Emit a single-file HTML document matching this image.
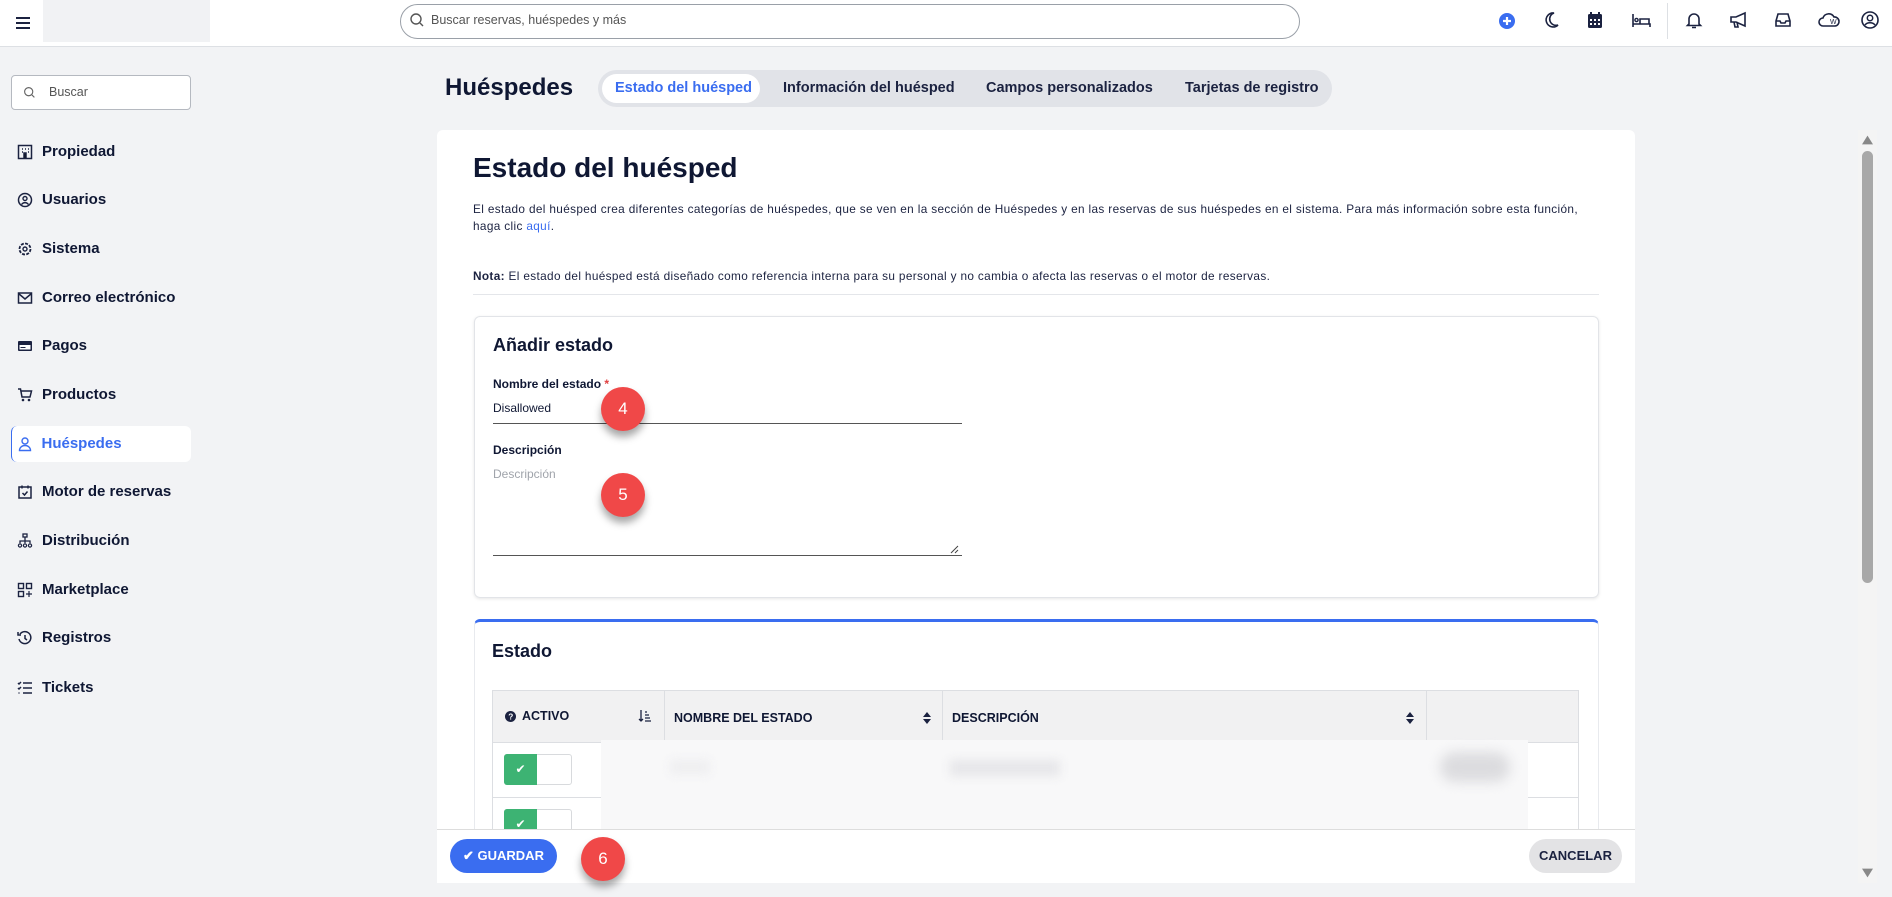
<!DOCTYPE html>
<html><head><meta charset="utf-8"><style>
*{box-sizing:border-box;margin:0;padding:0}
body{width:1892px;height:897px;overflow:hidden;background:#f2f3f5;font-family:"Liberation Sans",sans-serif;color:#0f1733;position:relative}
.abs{position:absolute}
.hdr{left:0;top:0;width:1892px;height:47px;background:#fff;border-bottom:1px solid #dde0e4}
.ico{position:absolute;width:20px;height:20px}
.nav{position:absolute;left:11px;width:180px;height:36px;font-size:15px;font-weight:600;color:#0f1733}
.nav svg{position:absolute;left:6px;top:10px;width:16px;height:16px}
.nav span{position:absolute;left:31px;top:9px}
.tab{position:absolute;top:70px;height:37px;line-height:37px;font-size:14.5px;font-weight:600;color:#1b2240}
.badge{position:absolute;width:44px;height:44px;border-radius:50%;background:#f04848;color:#fff;font-size:17px;text-align:center;line-height:44px;box-shadow:0 6px 8px rgba(0,0,0,.35)}
</style></head><body>
<div class="abs hdr"></div>
<svg class="ico" style="left:13px;top:13px" viewBox="0 0 20 20"><path d="M3 5h14M3 10h14M3 15h14" stroke="#1b2240" stroke-width="2"/></svg>
<div class="abs" style="left:43px;top:0;width:167px;height:42px;background:#f1f2f4"></div>
<div class="abs" style="left:400px;top:4px;width:900px;height:35px;border:1px solid #9aa0a8;border-radius:18px;background:#fff"></div>
<svg class="ico" style="left:409px;top:12px;width:16px;height:16px" viewBox="0 0 16 16"><circle cx="7" cy="7" r="5" fill="none" stroke="#555" stroke-width="1.4"/><path d="M11 11l3 3" stroke="#555" stroke-width="1.4"/></svg>
<div class="abs" style="left:431px;top:13px;font-size:12.5px;color:#555">Buscar reservas, huéspedes y más</div>
<svg class="ico" style="left:1497px;top:11px" viewBox="0 0 20 20"><circle cx="10" cy="10" r="8" fill="#3a6df0"/><path d="M10 6v8M6 10h8" stroke="#fff" stroke-width="2.2"/></svg>
<svg class="ico" style="left:1541px;top:10px" viewBox="0 0 20 20"><path d="M13 3a7 7 0 1 0 4 12A6 6 0 0 1 13 3z" fill="none" stroke="#1b2240" stroke-width="1.6"/></svg>
<svg class="ico" style="left:1585px;top:10px" viewBox="0 0 20 20"><rect x="3" y="4" width="14" height="14" rx="1.5" fill="#1b2240"/><path d="M6 2v4M14 2v4" stroke="#1b2240" stroke-width="2"/><g fill="#fff"><rect x="5" y="9" width="2" height="2"/><rect x="9" y="9" width="2" height="2"/><rect x="13" y="9" width="2" height="2"/><rect x="5" y="13" width="2" height="2"/><rect x="9" y="13" width="2" height="2"/><rect x="13" y="13" width="2" height="2"/></g></svg>
<svg class="ico" style="left:1631px;top:10px" viewBox="0 0 20 20"><path d="M2 4v13M2 14h17v3M18 14V9H9v5" fill="none" stroke="#1b2240" stroke-width="1.6"/><circle cx="5.5" cy="10" r="1.6" fill="none" stroke="#1b2240" stroke-width="1.4"/></svg>
<div class="abs" style="left:1667px;top:3px;width:1px;height:36px;background:#dde0e4"></div>
<svg class="ico" style="left:1684px;top:10px" viewBox="0 0 20 20"><path d="M5 14V9a5 5 0 0 1 10 0v5l1.5 1.5h-13z M8 17.5h4" fill="none" stroke="#1b2240" stroke-width="1.6"/></svg>
<svg class="ico" style="left:1729px;top:10px" viewBox="0 0 20 20"><path d="M2 7h5l9-4v13l-9-4H2z M5 12l1 5h3l-1-5" fill="none" stroke="#1b2240" stroke-width="1.6"/></svg>
<svg class="ico" style="left:1773px;top:10px" viewBox="0 0 20 20"><path d="M3 11l2-7h10l2 7v5H3z M3 11h4l1 2h4l1-2h4" fill="none" stroke="#1b2240" stroke-width="1.6"/></svg>
<svg class="ico" style="left:1817px;top:10px;width:24px" viewBox="0 0 24 20"><path d="M6 16a4 4 0 0 1 0-8 6 6 0 0 1 11-1 4.5 4.5 0 0 1 1 9z" fill="none" stroke="#1b2240" stroke-width="1.6"/><text x="13" y="14" font-size="7" font-family="Liberation Sans" fill="#1b2240">W</text></svg>
<svg class="ico" style="left:1860px;top:10px" viewBox="0 0 20 20"><circle cx="10" cy="10" r="8" fill="none" stroke="#1b2240" stroke-width="1.6"/><circle cx="10" cy="8" r="2.7" fill="none" stroke="#1b2240" stroke-width="1.5"/><path d="M5 15c2-3 8-3 10 0" fill="none" stroke="#1b2240" stroke-width="1.5"/></svg>

<div class="abs" style="left:11px;top:75px;width:180px;height:35px;border:1px solid #b5b9c0;border-radius:4px;background:#fff"></div>
<svg class="ico" style="left:23px;top:86px;width:13px;height:13px" viewBox="0 0 16 16"><circle cx="7" cy="7" r="5" fill="none" stroke="#666" stroke-width="1.4"/><path d="M11 11l3 3" stroke="#666" stroke-width="1.4"/></svg>
<div class="abs" style="left:49px;top:85px;font-size:12.5px;color:#555">Buscar</div>

<div class="nav" style="top:134px"><svg viewBox="0 0 16 16"><rect x="1.5" y="1.5" width="13" height="13" fill="none" stroke="#1b2240" stroke-width="1.5"/><path d="M5 5h1M8 5h1M11 5h1M5 8h1M11 8h1M7 14V9h2v5" stroke="#1b2240" stroke-width="1.5"/></svg><span>Propiedad</span></div>
<div class="nav" style="top:182px"><svg viewBox="0 0 16 16"><circle cx="8" cy="8" r="6.5" fill="none" stroke="#1b2240" stroke-width="1.5"/><circle cx="8" cy="6.5" r="2" fill="none" stroke="#1b2240" stroke-width="1.4"/><path d="M4.5 12.5c2-2.5 5-2.5 7 0" fill="none" stroke="#1b2240" stroke-width="1.4"/></svg><span>Usuarios</span></div>
<div class="nav" style="top:231px"><svg viewBox="0 0 16 16"><circle cx="8" cy="8" r="5.5" fill="none" stroke="#1b2240" stroke-width="1.8" stroke-dasharray="3 1.3"/><circle cx="8" cy="8" r="2" fill="none" stroke="#1b2240" stroke-width="1.4"/></svg><span>Sistema</span></div>
<div class="nav" style="top:280px"><svg viewBox="0 0 16 16"><rect x="1.5" y="3" width="13" height="10" fill="none" stroke="#1b2240" stroke-width="1.5"/><path d="M1.5 3.5L8 9l6.5-5.5" fill="none" stroke="#1b2240" stroke-width="1.5"/></svg><span>Correo electrónico</span></div>
<div class="nav" style="top:328px"><svg viewBox="0 0 16 16"><rect x="1" y="3" width="14" height="10" rx="1" fill="#1b2240"/><rect x="2.5" y="7" width="11" height="4.5" fill="#fff"/><path d="M3.5 9.5h5" stroke="#1b2240"/></svg><span>Pagos</span></div>
<div class="nav" style="top:377px"><svg viewBox="0 0 16 16"><path d="M1 2h2.5l1.5 8h8l1.5-6H4" fill="none" stroke="#1b2240" stroke-width="1.5"/><circle cx="6" cy="13" r="1.3" fill="#1b2240"/><circle cx="12" cy="13" r="1.3" fill="#1b2240"/></svg><span>Productos</span></div>
<div class="nav" style="top:426px;background:#fff;border-radius:6px;border-left:1.5px solid #3a6df0;color:#3a6df0"><svg viewBox="0 0 16 16" style="left:4.5px"><circle cx="8" cy="5" r="3" fill="none" stroke="#3a6df0" stroke-width="1.4"/><path d="M2.5 14.5c0-3 2.5-5 5.5-5s5.5 2 5.5 5z" fill="none" stroke="#3a6df0" stroke-width="1.4"/></svg><span style="left:29.5px">Huéspedes</span></div>
<div class="nav" style="top:474px"><svg viewBox="0 0 16 16"><rect x="2" y="3" width="12" height="11" fill="none" stroke="#1b2240" stroke-width="1.5"/><path d="M5 1.5v3M11 1.5v3M5.5 9l2 2 3-3.5" fill="none" stroke="#1b2240" stroke-width="1.5"/></svg><span>Motor de reservas</span></div>
<div class="nav" style="top:523px"><svg viewBox="0 0 16 16"><rect x="6" y="1" width="4" height="3" fill="none" stroke="#1b2240" stroke-width="1.3"/><path d="M8 4v4M3 10V8h10v2M8 8v2" fill="none" stroke="#1b2240" stroke-width="1.3"/><circle cx="3" cy="12.5" r="1.6" fill="none" stroke="#1b2240" stroke-width="1.2"/><circle cx="8" cy="12.5" r="1.6" fill="none" stroke="#1b2240" stroke-width="1.2"/><circle cx="13" cy="12.5" r="1.6" fill="none" stroke="#1b2240" stroke-width="1.2"/></svg><span>Distribución</span></div>
<div class="nav" style="top:572px"><svg viewBox="0 0 16 16"><rect x="1.5" y="1.5" width="5" height="5" fill="none" stroke="#1b2240" stroke-width="1.4"/><rect x="9.5" y="1.5" width="5" height="5" fill="none" stroke="#1b2240" stroke-width="1.4"/><rect x="1.5" y="9.5" width="5" height="5" fill="none" stroke="#1b2240" stroke-width="1.4"/><path d="M12 9v6M9 12h6" stroke="#1b2240" stroke-width="1.2"/></svg><span>Marketplace</span></div>
<div class="nav" style="top:620px"><svg viewBox="0 0 16 16"><path d="M3 4a6 6 0 1 1-1 5" fill="none" stroke="#1b2240" stroke-width="1.5"/><path d="M1 2v3h3M8 5v3.5l2 1.5" fill="none" stroke="#1b2240" stroke-width="1.5"/></svg><span>Registros</span></div>
<div class="nav" style="top:670px"><svg viewBox="0 0 16 16"><path d="M6 3h9M6 8h9M6 13h9M1 3l1 1 2-2M1 8l1 1 2-2M1.5 13h1" fill="none" stroke="#1b2240" stroke-width="1.5"/></svg><span>Tickets</span></div>

<div class="abs" style="left:445px;top:74px;font-size:24px;font-weight:700;color:#0f1733">Huéspedes</div>
<div class="abs" style="left:598px;top:70px;width:734px;height:37px;border-radius:19px;background:#e1e3e8"></div>
<div class="abs" style="left:602px;top:74px;width:158px;height:29px;border-radius:15px;background:#fff"></div>
<div class="tab" style="left:615px;color:#3a6df0">Estado del huésped</div>
<div class="tab" style="left:783px">Información del huésped</div>
<div class="tab" style="left:986px">Campos personalizados</div>
<div class="tab" style="left:1185px">Tarjetas de registro</div>

<div class="abs" style="left:437px;top:130px;width:1198px;height:767px;background:#fff;border-radius:6px"></div>
<div class="abs" style="left:473px;top:152px;font-size:28px;font-weight:600;color:#0f1733">Estado del huésped</div>
<div class="abs" style="left:473px;top:201px;width:1118px;font-size:11.8px;line-height:17px;letter-spacing:0.35px;color:#1b2240">El estado del huésped crea diferentes categorías de huéspedes, que se ven en la sección de Huéspedes y en las reservas de sus huéspedes en el sistema. Para más información sobre esta función, haga clic <span style="color:#3a6df0">aquí</span>.</div>
<div class="abs" style="left:473px;top:269px;font-size:11.8px;letter-spacing:0.35px;color:#1b2240"><b>Nota:</b> El estado del huésped está diseñado como referencia interna para su personal y no cambia o afecta las reservas o el motor de reservas.</div>
<div class="abs" style="left:473px;top:294px;width:1126px;height:1px;background:#e4e6ea"></div>

<div class="abs" style="left:474px;top:316px;width:1125px;height:282px;border:1px solid #e2e4e8;border-radius:6px;box-shadow:0 1px 3px rgba(0,0,0,.1)"></div>
<div class="abs" style="left:493px;top:335px;font-size:18px;font-weight:600">Añadir estado</div>
<div class="abs" style="left:493px;top:377px;font-size:12px;font-weight:600">Nombre del estado <span style="color:#e04040">*</span></div>
<div class="abs" style="left:493px;top:401px;font-size:12px">Disallowed</div>
<div class="abs" style="left:493px;top:423px;width:469px;height:1px;background:#555"></div>
<div class="abs" style="left:493px;top:443px;font-size:12px;font-weight:600">Descripción</div>
<div class="abs" style="left:493px;top:467px;font-size:12px;color:#a0a4ab">Descripción</div>
<div class="abs" style="left:493px;top:555px;width:469px;height:1px;background:#555"></div>
<svg class="abs" style="left:950px;top:545px;width:9px;height:9px" viewBox="0 0 9 9"><path d="M1 8L8 1M5 8L8 5" stroke="#444" stroke-width="1"/></svg>
<div class="badge" style="left:601px;top:387px">4</div>
<div class="badge" style="left:601px;top:473px">5</div>

<div class="abs" style="left:474px;top:619px;width:1125px;height:278px;border:1px solid #e8eaee;border-top:3px solid #3a6df0;border-radius:6px 6px 0 0"></div>
<div class="abs" style="left:492px;top:641px;font-size:18px;font-weight:600">Estado</div>
<div class="abs" style="left:492px;top:690px;width:1087px;height:207px;border:1px solid #dcdee2;background:#fff"></div>
<div class="abs" style="left:493px;top:691px;width:1085px;height:52px;background:#f1f1f2;border-bottom:1px solid #dcdee2"></div>
<div class="abs" style="left:664px;top:691px;width:1px;height:206px;background:#dcdee2"></div>
<div class="abs" style="left:942px;top:691px;width:1px;height:206px;background:#dcdee2"></div>
<div class="abs" style="left:1426px;top:691px;width:1px;height:206px;background:#dcdee2"></div>
<div class="abs" style="left:493px;top:797px;width:1085px;height:1px;background:#dcdee2"></div>
<svg class="abs" style="left:505px;top:711px;width:11px;height:11px" viewBox="0 0 12 12"><circle cx="6" cy="6" r="6" fill="#1b2240"/><text x="3.5" y="9.5" font-size="9" font-weight="bold" fill="#fff" font-family="Liberation Sans">?</text></svg>
<div class="abs" style="left:522px;top:709px;font-size:12.5px;font-weight:600">ACTIVO</div>
<svg class="abs" style="left:638px;top:709px;width:14px;height:14px" viewBox="0 0 14 14"><path d="M3 1v11M1 10l2 2 2-2M7 3h2M7 6h4M7 9h5M7 12h6" stroke="#1b2240" stroke-width="1.3" fill="none"/></svg>
<div class="abs" style="left:674px;top:711px;font-size:12.5px;font-weight:600">NOMBRE DEL ESTADO</div>
<div class="abs" style="left:952px;top:711px;font-size:12.5px;font-weight:600">DESCRIPCIÓN</div>
<svg class="abs" style="left:923px;top:712px;width:8px;height:12px" viewBox="0 0 8 12"><path d="M4 0L8 5H0zM4 12L0 7h8z" fill="#1b2240"/></svg>
<svg class="abs" style="left:1406px;top:712px;width:8px;height:12px" viewBox="0 0 8 12"><path d="M4 0L8 5H0zM4 12L0 7h8z" fill="#1b2240"/></svg>
<div class="abs" style="left:504px;top:754px;width:68px;height:31px;border:1px solid #d8dadd;border-radius:3px;background:#fff"></div>
<div class="abs" style="left:504px;top:754px;width:33px;height:31px;background:#3db373;border-radius:3px 0 0 3px;color:#fff;font-size:12px;text-align:center;line-height:31px">✔</div>
<div class="abs" style="left:504px;top:809px;width:68px;height:24px;border:1px solid #d8dadd;border-radius:3px;background:#fff"></div>
<div class="abs" style="left:504px;top:809px;width:33px;height:24px;background:#3db373;border-radius:3px 0 0 0;color:#fff;font-size:12px;text-align:center;line-height:31px">✔</div>
<div class="abs" style="left:601px;top:740px;width:927px;height:90px;background:#f8f8f9"></div>
<div class="abs" style="left:1440px;top:752px;width:70px;height:30px;border-radius:15px;background:#dcdcdf;filter:blur(6px)"></div>
<div class="abs" style="left:950px;top:760px;width:110px;height:16px;background:#e6e6e9;filter:blur(5px)"></div>
<div class="abs" style="left:670px;top:760px;width:40px;height:14px;background:#eeeef0;filter:blur(5px)"></div>

<div class="abs" style="left:437px;top:829px;width:1198px;height:54px;background:#fff;border-top:1px solid #ddd"></div>
<div class="abs" style="left:0;top:883px;width:1892px;height:14px;background:#f2f3f5"></div>
<div class="abs" style="left:450px;top:839px;width:107px;height:34px;border-radius:17px;background:#3a6df0;color:#fff;font-size:13px;font-weight:600;text-align:center;line-height:34px">✔ GUARDAR</div>
<div class="abs" style="left:1529px;top:839px;width:93px;height:34px;border-radius:17px;background:#e3e3e5;color:#1b2240;font-size:13px;font-weight:600;text-align:center;line-height:34px">CANCELAR</div>
<div class="badge" style="left:581px;top:837px">6</div>

<div class="abs" style="left:1858px;top:130px;width:19px;height:753px;background:#f4f4f4"></div>
<svg class="abs" style="left:1862px;top:135px;width:11px;height:10px" viewBox="0 0 10 8"><path d="M5 0L10 8H0z" fill="#888"/></svg>
<div class="abs" style="left:1862px;top:151px;width:11px;height:432px;border-radius:6px;background:#a8a8a8"></div>
<svg class="abs" style="left:1862px;top:868px;width:11px;height:10px" viewBox="0 0 10 8"><path d="M0 0H10L5 8z" fill="#888"/></svg>
</body></html>
